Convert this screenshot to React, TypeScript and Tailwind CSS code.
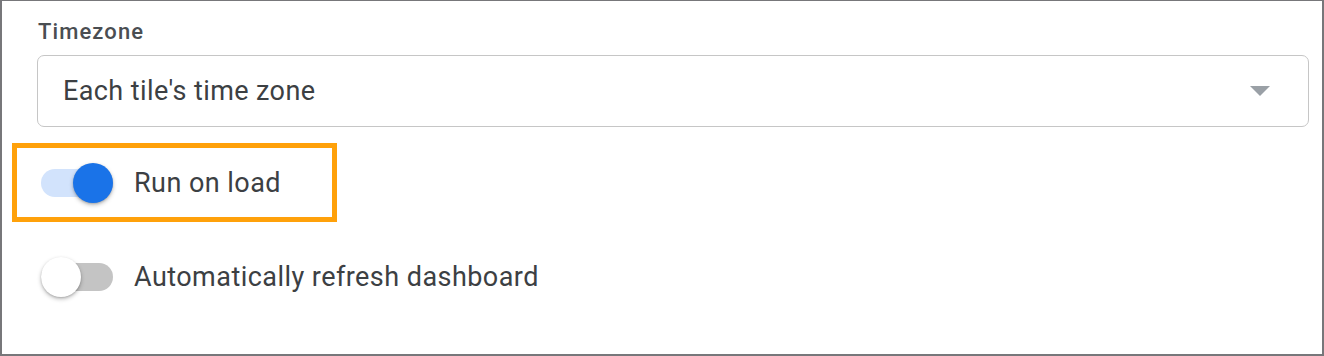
import React from "react";

function Toggle({ on }: { on: boolean }) {
  return (
    <div className="relative w-[72px] h-[40px] shrink-0">
      <div
        className={
          "absolute left-0 top-[6px] w-[72px] h-[28px] rounded-full " +
          (on ? "bg-[#d2e3fc]" : "bg-[#c4c4c4]")
        }
      />
      <div
        className={
          "absolute top-0 w-[40px] h-[40px] rounded-full shadow-[0_2px_4px_rgba(0,0,0,0.25),0_1px_2px_rgba(0,0,0,0.15)] " +
          (on ? "left-[32px] bg-[#1a73e8]" : "left-0 bg-white")
        }
      />
    </div>
  );
}

export default function App() {
  return (
    <div
      className="w-[1324px] h-[356px] bg-white border-l-2 border-r-2 border-b-2 border-t border-[#77777a] pl-[10px] pr-[13px] text-[#3c4043]"
      style={{ fontFamily: "Roboto, 'Liberation Sans', sans-serif" }}
    >
      <div className="ml-[26px] pt-[17px] text-[22px] leading-[28px] font-medium tracking-[1.1px] text-[#4a4e52]">
        Timezone
      </div>
      <div className="ml-[25px] mt-[9px] h-[72px] border-[1.5px] border-[#c6c6c6] rounded-[7px] flex items-center justify-between pl-[25px] pr-[38px]">
        <span className="text-[27px] leading-[32px] tracking-[0.4px]">Each tile's time zone</span>
        <svg width="20" height="10" viewBox="0 0 20 10" className="shrink-0">
          <path d="M0 0 L20 0 L10 10 Z" fill="#9aa0a6" />
        </svg>
      </div>
      <div className="mt-[16px] w-[325px] h-[79px] border-[5px] border-[#ffa10a] flex items-center pl-[24px] gap-[21px]">
        <Toggle on={true} />
        <span className="text-[27px] leading-[32px] tracking-[0.45px]">Run on load</span>
      </div>
      <div className="mt-[35px] flex items-center pl-[29px] gap-[21px]">
        <Toggle on={false} />
        <span className="text-[27px] leading-[32px] tracking-[0.45px]">Automatically refresh dashboard</span>
      </div>
    </div>
  );
}
